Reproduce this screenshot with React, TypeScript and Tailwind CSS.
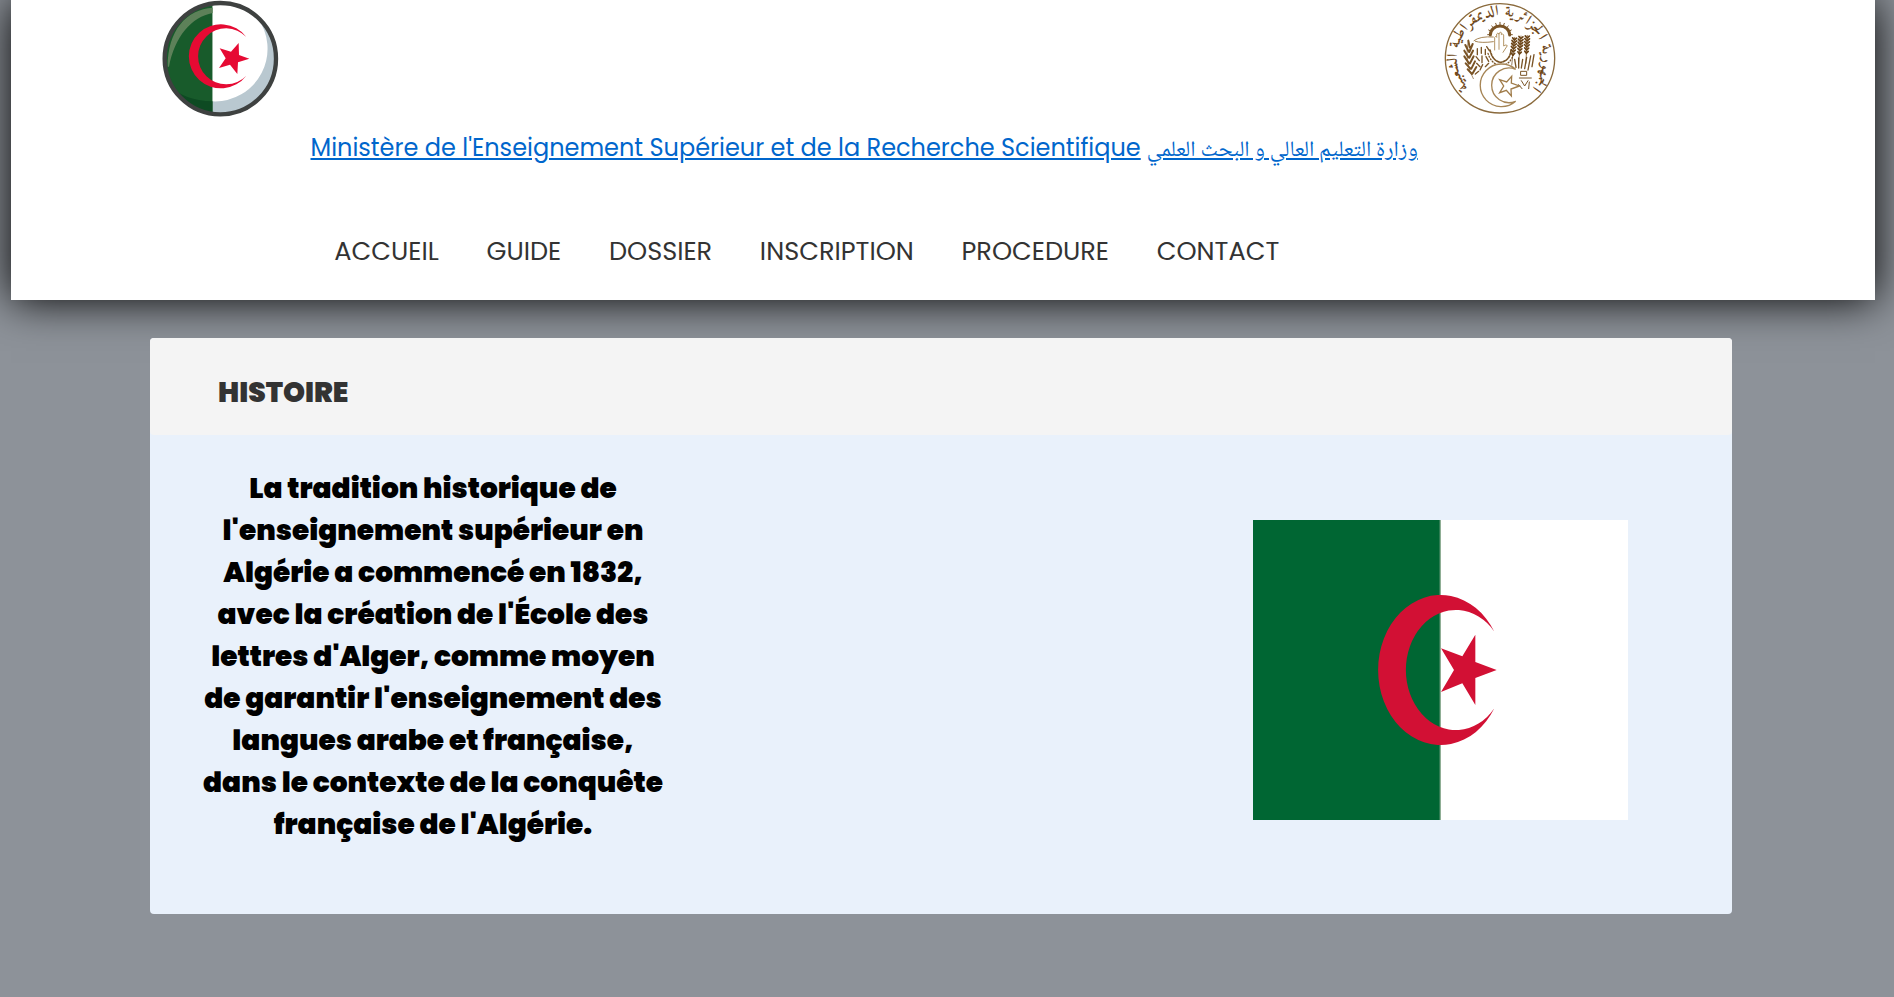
const NAV = ["ACCUEIL", "GUIDE", "DOSSIER", "INSCRIPTION", "PROCEDURE", "CONTACT"];

const HISTORY = [
  "La tradition historique de",
  "l'enseignement supérieur en",
  "Algérie a commencé en 1832,",
  "avec la création de l'École des",
  "lettres d'Alger, comme moyen",
  "de garantir l'enseignement des",
  "langues arabe et française,",
  "dans le contexte de la conquête",
  "française de l'Algérie.",
];

function RoundFlag() {
  return (
    <svg viewBox="480 0 360 360" className="h-[120px] w-[120px] shrink-0" aria-hidden="true">
      <defs>
        <clipPath id="disc">
          <circle cx="661" cy="176" r="165" />
        </clipPath>
      </defs>
      <g clipPath="url(#disc)">
        <rect x="480" y="0" width="158" height="360" fill="#185b2b" />
        <rect x="638" y="0" width="202" height="360" fill="#ffffff" />
        <path d="M770 50A158 158 0 0 1 638 304V360H850V50Z" fill="#b9c8d0" />
        <path d="M500 250Q550 303 638 304V360H480Z" fill="#0d4a22" />
        <path d="M638 23C560 28 503 90 503 200H507C524 110 575 50 638 39Z" fill="#5d8159" />
      </g>
      <path d="M739 111A96 96 0 1 0 739 227A84 84 0 1 1 739 111Z" fill="#e60a33" />
      <path d="M748 176L714 187L712 222L690 194L657 204L677 175L659 145L693 155L716 129L717 165Z" fill="#e60a33" />
      <circle cx="661" cy="176" r="167" fill="none" stroke="#3e4140" strokeWidth="13" />
    </svg>
  );
}

function WheatEar({ x, y, rotate }: { x: number; y: number; rotate: number }) {
  return (
    <g transform={`translate(${x} ${y}) rotate(${rotate})`} stroke="#6b4417" strokeLinecap="round" fill="none">
      <path d="M0 0V84" strokeWidth="2" />
      <path d="M-6 2L0 8L6 2M-7 10L0 17L7 10M-7 19L0 26L7 19M-7 28L0 35L7 28M-6 38L0 44L6 38M-5 48L0 54L5 48" strokeWidth="5" />
    </g>
  );
}

function Emblem() {
  return (
    <svg viewBox="60 0 360 351" className="h-[117px] w-[120px] shrink-0 overflow-visible" aria-hidden="true">
      <defs>
        <path id="arc" d="M151 270A130 130 0 1 1 329 270" />
      </defs>
      <circle cx="240" cy="175" r="164" fill="#fff" stroke="#8a6a3c" strokeWidth="4" />
      <text
        className="font-['Amiri','DejaVu_Sans',serif] text-[44px] font-bold"
        direction="rtl"
        textAnchor="middle"
        fill="#70491b"
      >
        <textPath href="#arc" startOffset="50%" textLength="600" lengthAdjust="spacing">
          الجمهورية الجزائرية الديمقراطية الشعبية
        </textPath>
      </text>
      <g fill="none" stroke="#7a5426" strokeLinecap="round" strokeLinejoin="round">
        <path d="M211 105A29 27 0 0 1 269 105" strokeWidth="9" />
        <path d="M203 104L209 104M206 90L212 93M215 78L220 83M227 70L230 77M240 67V75M253 70L250 77M265 78L260 83M274 90L268 93M277 104L271 104" strokeWidth="3" />
        <path d="M224 150V112Q227 106 230 112V102Q234 96 237 102V148M237 102Q241 92 244 98V104Q248 99 251 105V138Q259 132 262 137L249 157" strokeWidth="3" stroke="#b39566" />
        <path d="M162 122Q180 108 220 111M166 124Q184 130 220 125" strokeWidth="3" stroke="#a68556" />
        <path d="M160 236Q132 190 145 120" strokeWidth="2" />
        <path d="M145 122L149 142M136 135L146 155M158 132L148 156M133 152L145 172M159 152L148 173M133 169L147 190M161 169L150 190M137 190L151 206M165 184L154 206M143 208L156 222M169 201L158 220" strokeWidth="6" />
        <path d="M172 146V164M184 142V160M196 148V164M168 170L178 182M186 168V188M198 170L206 184M170 190L180 200M188 194L180 210M206 190L196 200M176 214L166 222M200 140L208 152" strokeWidth="4" />
        <path d="M210 150Q218 184 242 187Q270 182 273 150" strokeWidth="5" strokeDasharray="6 4" />
        <path d="M204 160Q214 192 242 198Q272 194 281 160" strokeWidth="4" strokeDasharray="3 6" />
        <path d="M284 178L288 202M296 174V204M308 178L304 204M320 172L314 206M332 168L324 210M342 164L336 200" strokeWidth="4" />
        <path d="M303 214H320V226H303ZM298 234H334M304 242L314 258L324 242M296 254L306 266M328 246L326 266" strokeWidth="3" />
      </g>
      <WheatEar x={284} y={112} rotate={6} />
      <WheatEar x={303} y={108} rotate={5} />
      <WheatEar x={322} y={106} rotate={3} />
      <path
        d="M287 208A64 64 0 1 0 287 304A52 52 0 1 1 287 208Z"
        fill="#fff"
        stroke="#a68556"
        strokeWidth="4"
      />
      <path
        d="M298 258L273 267L274 288L259 271L239 278L251 258L239 239L260 246L275 229L274 249Z"
        fill="#fff"
        stroke="#a07c4a"
        strokeWidth="4"
      />
    </svg>
  );
}

function Flag() {
  return (
    <svg viewBox="0 0 1125 900" className="h-[300px] w-[375px] shrink-0" aria-hidden="true">
      <rect width="1125" height="900" fill="#fff" />
      <rect width="562" height="900" fill="#006633" />
      <rect x="560" width="4" height="900" fill="#8fae95" />
      <path d="M724 335A187.5 225 0 1 0 724 565A150 180 0 1 1 724 335Z" fill="#d21034" />
      <path
        d="M731 450L667 474V555L628 490L564 516L603 450L564 385L628 409L667 344V426Z"
        fill="#d21034"
      />
    </svg>
  );
}

export default function App() {
  return (
    <div className="min-h-screen overflow-hidden bg-[#8d9299] font-['Poppins','Inter',sans-serif]">
      <header className="mr-[19px] ml-[11px] h-[300px] bg-white shadow-[0_0_42px_#000]">
        <div className="flex h-[130px] items-start justify-between pr-[315px] pl-[149px]">
          <RoundFlag />
          <Emblem />
        </div>
        <div className="flex h-9 items-baseline gap-[6px] pl-[299.5px] text-2xl leading-9 whitespace-nowrap text-[#0066cc]">
          <a href="#" className="underline">
            Ministère de l'Enseignement Supérieur et de la Recherche Scientifique
          </a>
          <a
            href="#"
            dir="rtl"
            className="font-['Noto_Naskh_Arabic','FreeSerif','DejaVu_Sans',serif] text-[22.1px] leading-9 underline"
          >
            وزارة التعليم العالي و البحث العلمي
          </a>
        </div>
        <nav className="mt-[66px] flex gap-[47.7px] pl-[323.3px] text-[25.6px] leading-[38px] text-[#333]">
          {NAV.map((item) => (
            <a key={item} href="#">
              {item}
            </a>
          ))}
        </nav>
      </header>

      <main className="mt-[38px] mr-[162px] ml-[150px] rounded bg-[#e9f1fb]">
        <h1 className="h-[97px] rounded bg-[#f4f4f4] pt-[34px] pl-[68px] text-[28px] leading-[42px] font-black text-[#333]">
          HISTOIRE
        </h1>
        <div className="flex h-[479px] items-start justify-between pr-[104px] pl-[33px]">
          <p className="w-[500px] pt-[33px] text-center text-[28px] leading-[42px] font-black whitespace-nowrap text-black">
            {HISTORY.map((line) => (
              <span key={line} className="block">
                {line}
              </span>
            ))}
          </p>
          <div className="pt-[85px]">
            <Flag />
          </div>
        </div>
      </main>
    </div>
  );
}
